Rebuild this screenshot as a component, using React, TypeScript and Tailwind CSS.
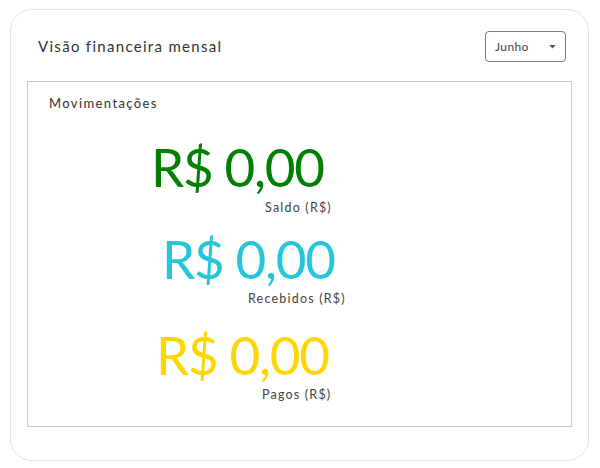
import React from 'react';

const font = { fontFamily: 'Lato, "Noto Sans", sans-serif' };

function Valor({ cor, label, valorCls, labelCls }: { cor: string; label: string; valorCls: string; labelCls: string }) {
  return (
    <div className="flex flex-col">
      <div className={`${valorCls} ${cor} text-[53px] leading-[46px] tracking-[-1.3px]`}>R$ 0,00</div>
      <div className={`${labelCls} text-[12.5px] leading-[16px] text-[#444] tracking-[1.2px]`}>{label}</div>
    </div>
  );
}

export default function App() {
  return (
    <div className="w-[600px] h-[468px] bg-white pt-[9px] pl-[10px]" style={font}>
      <div className="w-[579px] h-[452px] rounded-[22px] border border-[#dce3e8] pt-[21px] px-[16px]">
        <div className="flex items-center justify-between pl-[11px] pr-[6px] h-[31px]">
          <h1 className="text-[15px] text-[#333] tracking-[1.3px]">Visão financeira mensal</h1>
          <div className="w-[81px] h-[31px] rounded-[4px] border border-[#7a7a7a] flex items-center justify-between pl-[9px] pr-[9px]">
            <span className="text-[12px] text-[#444] tracking-[0.4px]">Junho</span>
            <svg width="7" height="4" viewBox="0 0 8 5"><path d="M0 0h8L4 4.5z" fill="#555" /></svg>
          </div>
        </div>
        <div className="mt-[19px] h-[346px] border border-[#c8c8c8] pt-[12px]">
          <div className="pl-[21px] text-[13px] leading-[18px] text-[#333] tracking-[1.4px]">Movimentações</div>
          <div className="mt-[32px] flex flex-col">
            <Valor cor="text-[#008000]" label="Saldo (R$)" valorCls="pl-[123px]" labelCls="pl-[237px] mt-[10px]" />
            <div className="h-[20px]" />
            <Valor cor="text-[#26c6da]" label="Recebidos (R$)" valorCls="pl-[134px]" labelCls="pl-[220px] mt-[9px]" />
            <div className="h-[25px]" />
            <Valor cor="text-[#ffd600]" label="Pagos (R$)" valorCls="pl-[128px]" labelCls="pl-[234px] mt-[9px]" />
          </div>
        </div>
      </div>
    </div>
  );
}
